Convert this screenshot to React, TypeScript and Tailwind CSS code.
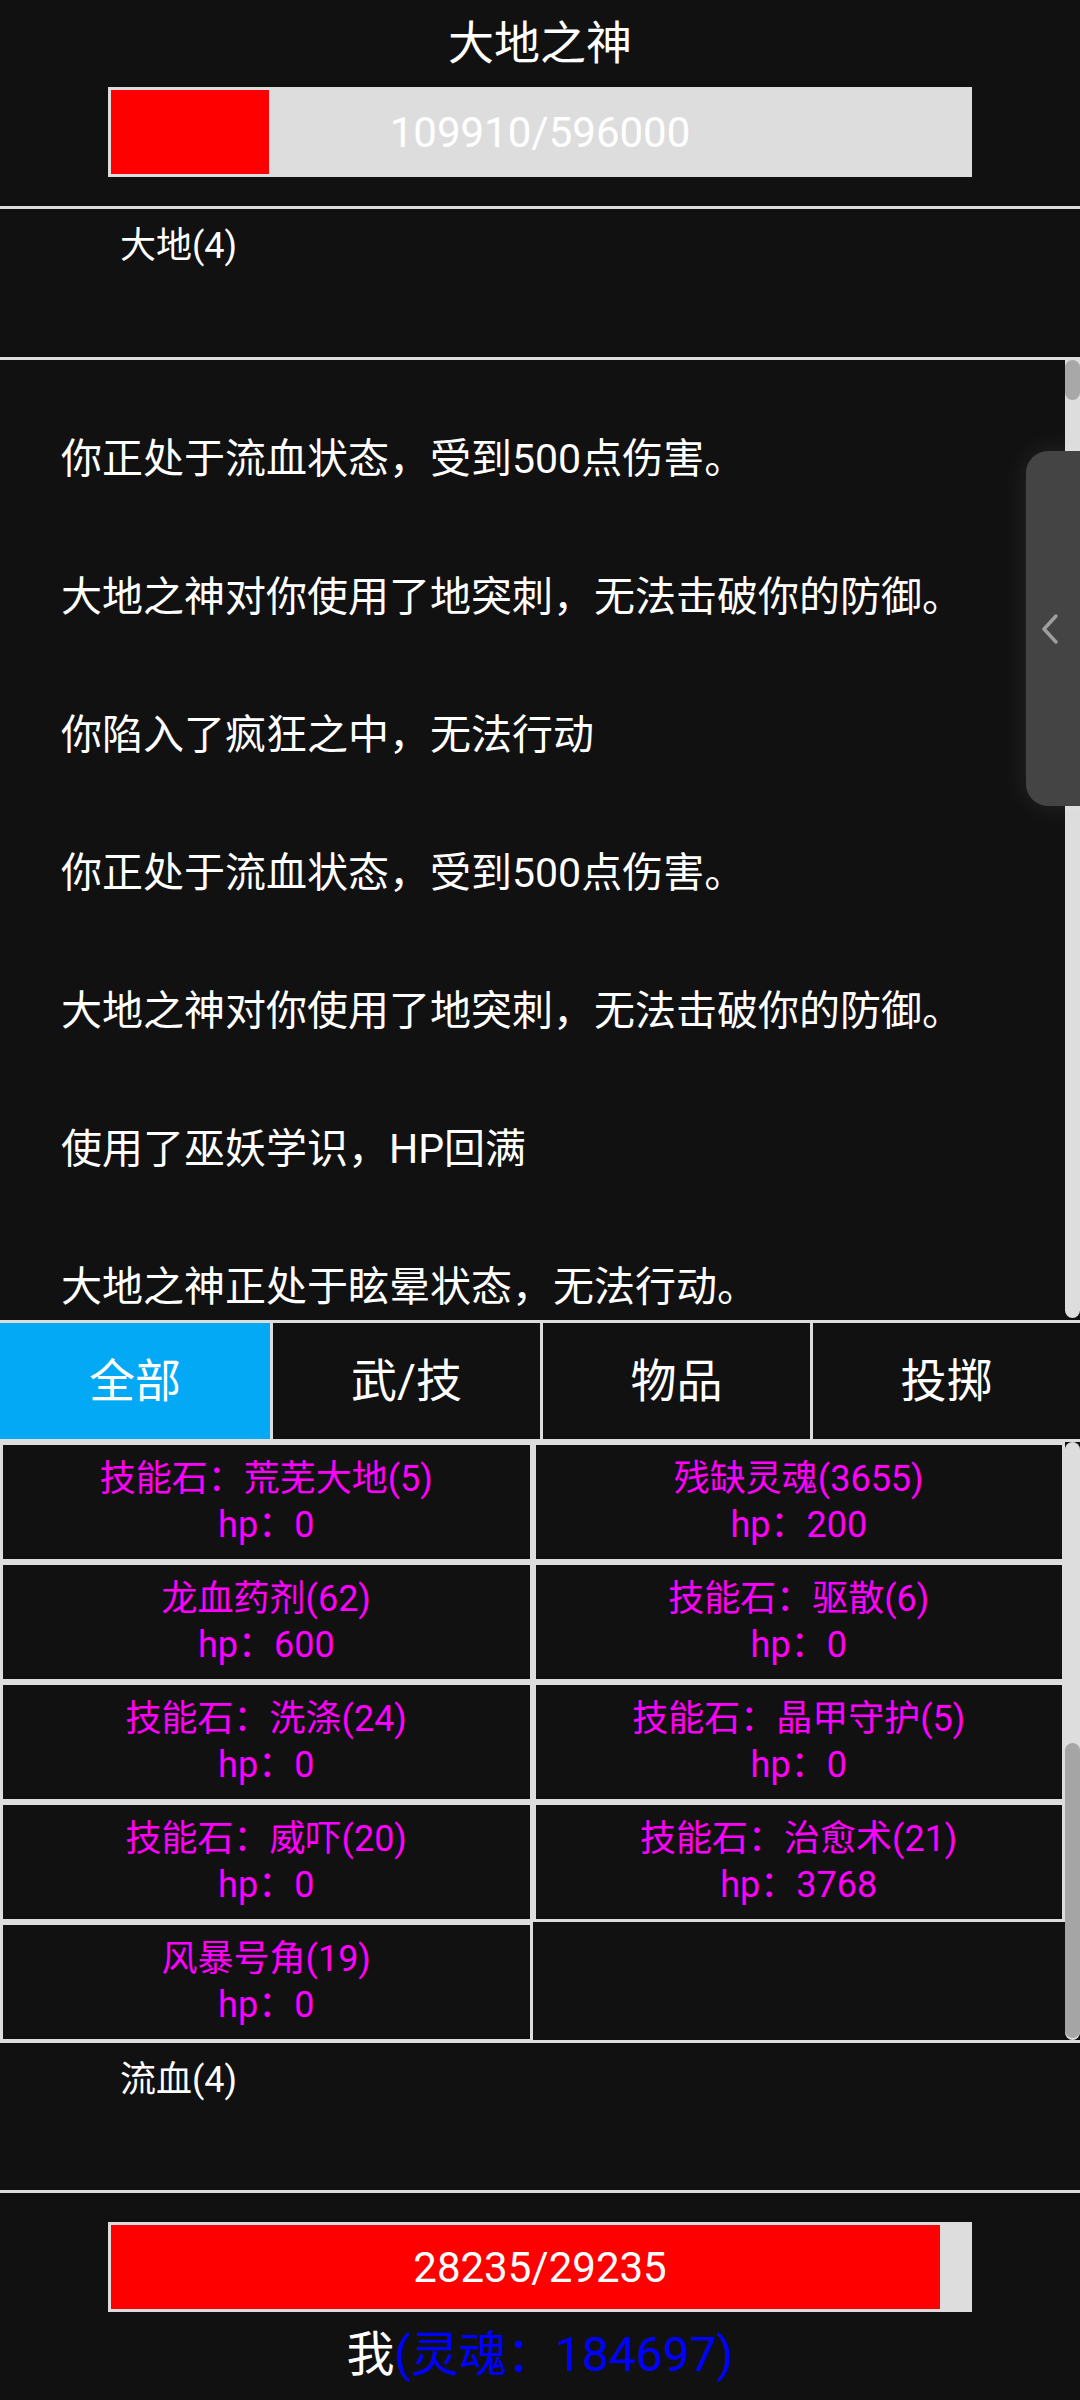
import React from "react";

const logLines = [
  "你正处于流血状态，受到500点伤害。",
  "大地之神对你使用了地突刺，无法击破你的防御。",
  "你陷入了疯狂之中，无法行动",
  "你正处于流血状态，受到500点伤害。",
  "大地之神对你使用了地突刺，无法击破你的防御。",
  "使用了巫妖学识，HP回满",
  "大地之神正处于眩晕状态，无法行动。",
];

const items = [
  { name: "技能石：荒芜大地(5)", hp: 0 },
  { name: "残缺灵魂(3655)", hp: 200 },
  { name: "龙血药剂(62)", hp: 600 },
  { name: "技能石：驱散(6)", hp: 0 },
  { name: "技能石：洗涤(24)", hp: 0 },
  { name: "技能石：晶甲守护(5)", hp: 0 },
  { name: "技能石：威吓(20)", hp: 0 },
  { name: "技能石：治愈术(21)", hp: 3768 },
  { name: "风暴号角(19)", hp: 0 },
];

const tabs = ["全部", "武/技", "物品", "投掷"];

const HpBar = ({ cur, max }: { cur: number; max: number }) => (
  <div className="relative w-[864px] h-[90px] bg-[#dddddd] p-[3px]">
    <div className="h-full bg-[#ff0000]" style={{ width: `${(cur / max) * 100}%` }} />
    <div className="absolute inset-0 flex items-center justify-center text-[42px] text-white">
      {cur}/{max}
    </div>
  </div>
);

const Line = () => <div className="h-[3px] bg-[#dddddd]" />;

const App = () => (
  <div className="relative w-[1080px] h-[2400px] overflow-hidden bg-[#111111] text-white font-['Roboto','Noto_Sans_CJK_SC',sans-serif]">
    {/* enemy */}
    <div className="h-[206px] flex flex-col items-center pt-[13px]">
      <div className="text-[46px] leading-[60px]">大地之神</div>
      <div className="mt-[14px]">
        <HpBar cur={109910} max={596000} />
      </div>
    </div>
    <Line />
    <div className="h-[148px] pl-[120px] pt-[10px] text-[36px] leading-[54px]">大地(4)</div>
    <Line />

    {/* battle log */}
    <div className="h-[960px] flex">
      <div className="flex-1 overflow-hidden pl-[61px] pt-[69px]">
        {logLines.map((t, i) => (
          <p key={i} className="h-[60px] leading-[60px] mb-[78px] text-[41px] whitespace-nowrap">
            {t}
          </p>
        ))}
      </div>
      <div className="w-[15px] h-[958px] bg-[#dddddd] rounded-b-full">
        <div className="h-[40px] rounded-full bg-[#a8a8a8]" />
      </div>
    </div>
    <Line />

    {/* tabs */}
    <div className="h-[116px] grid grid-cols-4">
      {tabs.map((t, i) => (
        <div
          key={t}
          className={`flex items-center justify-center text-[46px] ${
            i === 0 ? "bg-[#03a9f4]" : "border-l-[3px] border-[#dddddd]"
          }`}
        >
          {t}
        </div>
      ))}
    </div>
    <Line />

    {/* items */}
    <div className="h-[598px] flex overflow-hidden">
      <div className="w-[1065px] grid grid-cols-2 content-start">
        {items.map((it, i) => (
          <div
            key={i}
            className="h-[120px] border-[3px] border-[#dddddd] flex flex-col items-center justify-center text-[36px] leading-[46px] text-[#ff00ff]"
          >
            <div>{it.name}</div>
            <div>hp：{it.hp}</div>
          </div>
        ))}
      </div>
      <div className="w-[15px] h-[598px] bg-[#dddddd] rounded-full relative">
        <div className="absolute left-0 right-0 top-[301px] h-[295px] rounded-full bg-[#a5a5a5]" />
      </div>
    </div>
    <Line />
    <div className="h-[147px] pl-[120px] pt-[10px] text-[36px] leading-[54px]">流血(4)</div>
    <Line />

    {/* player */}
    <div className="h-[207px] flex flex-col items-center pt-[29px]">
      <HpBar cur={28235} max={29235} />
      <div className="mt-[13px] text-[48px] leading-[60px]">
        我<span className="text-[#0000ff]">(灵魂：184697)</span>
      </div>
    </div>

    {/* side drawer handle */}
    <div className="absolute left-[1026px] top-[451px] w-[70px] h-[355px] rounded-l-[22px] bg-[#444444] shadow-[0_0_28px_rgba(255,255,255,0.09)] flex items-center pl-[15px]">
      <svg width="18" height="32" viewBox="0 0 18 32" fill="none">
        <polyline points="15,3 3,16 15,29" stroke="#9e9e9e" strokeWidth="3.5" strokeLinecap="round" strokeLinejoin="round" />
      </svg>
    </div>
  </div>
);

export default App;
